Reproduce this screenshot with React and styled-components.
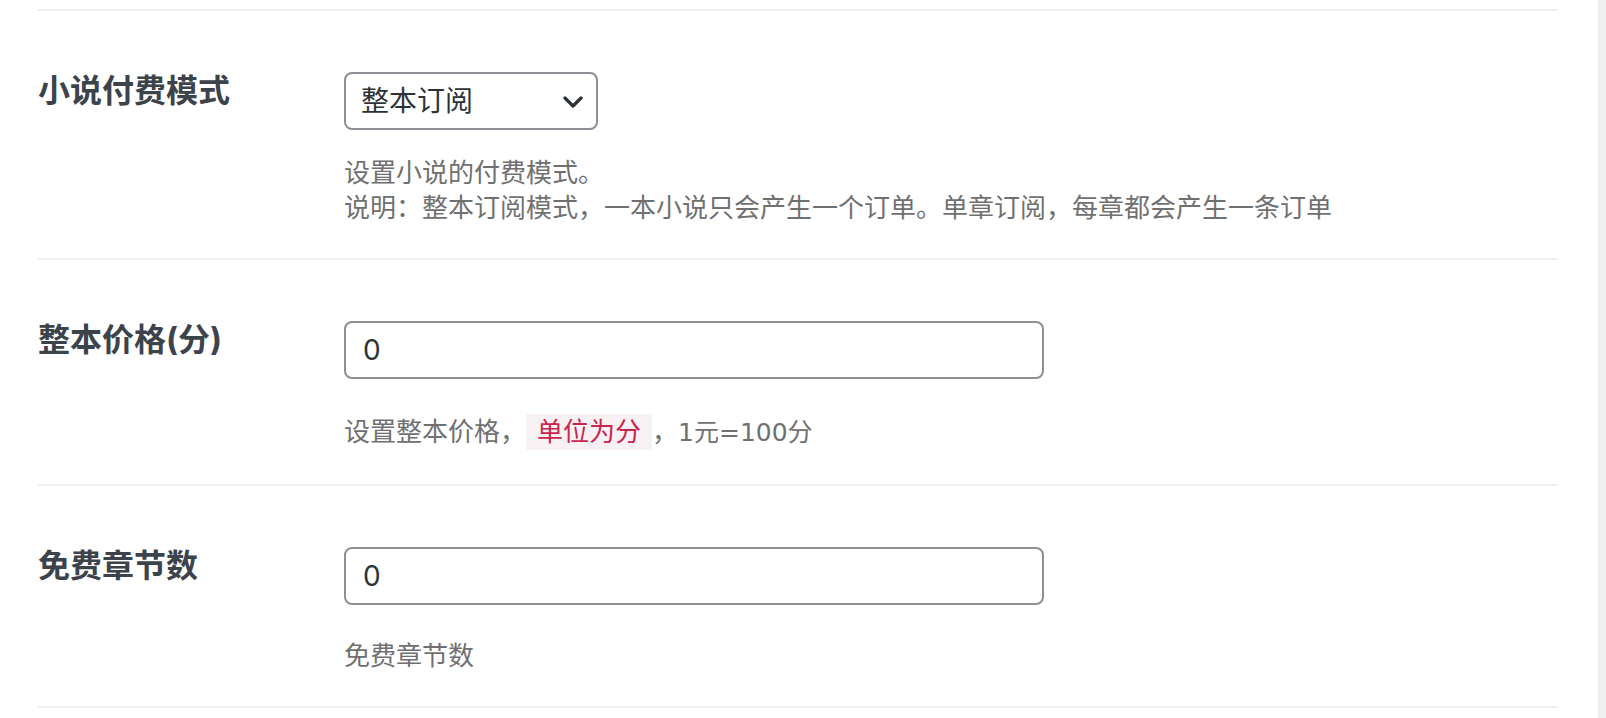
import React, {useState} from 'react';
import styled, {createGlobalStyle} from 'styled-components';

const GlobalStyle = createGlobalStyle`
  body {
    margin: 0;
    background: #fff;
    font-family: Inter, "Noto Sans CJK SC", sans-serif;
  }
`;

const ChevronDown = () => (
  <svg width="20" height="12" viewBox="0 0 20 12" fill="none">
    <polyline points="2,2 10,10 18,2" stroke="#2c3338" strokeWidth="3.2" strokeLinecap="round" strokeLinejoin="round" />
  </svg>
);

const App = () => {
  const [mode, setMode] = useState('whole');
  const [price, setPrice] = useState('0');
  const [free, setFree] = useState('0');

  return (
    <Page>
      <GlobalStyle />
      <Content>
        <FormTable>
          <Row>
            <Label>小说付费模式</Label>
            <Field>
              <SelectWrap>
                <Select value={mode} onChange={e => setMode(e.target.value)}>
                  <option value="whole">整本订阅</option>
                  <option value="chapter">单章订阅</option>
                </Select>
                <Chevron><ChevronDown /></Chevron>
              </SelectWrap>
              <Help $gap={25}>
                设置小说的付费模式。<br />
                说明：整本订阅模式，一本小说只会产生一个订单。单章订阅，每章都会产生一条订单
              </Help>
            </Field>
          </Row>
          <Row>
            <Label>整本价格(分)</Label>
            <Field>
              <TextInput type="text" value={price} onChange={e => setPrice(e.target.value)} />
              <Help $gap={35} $lh={36}>
                设置整本价格，<Code>单位为分</Code>，<Num>1元=100分</Num>
              </Help>
            </Field>
          </Row>
          <Row>
            <Label>免费章节数</Label>
            <Field>
              <TextInput type="text" value={free} onChange={e => setFree(e.target.value)} />
              <Help $gap={33}>免费章节数</Help>
            </Field>
          </Row>
        </FormTable>
      </Content>
      <Strip />
    </Page>
  );
};

const Page = styled.div`
  display: flex;
  min-height: 100vh;
`;
const Content = styled.div`
  flex: 1;
  padding: 9px 40px 0 38px;
`;
const Strip = styled.div`
  width: 8px;
  flex-shrink: 0;
  background: #efefef;
`;
const FormTable = styled.div`
  border-top: 2px solid #f0f0f1;
`;
const Row = styled.div`
  display: flex;
  padding: 61px 0 33px;
  border-bottom: 2px solid #f0f0f1;
`;
const Label = styled.div`
  width: 306px;
  flex-shrink: 0;
  font-size: 32px;
  font-weight: 700;
  line-height: 38px;
  color: #3c434a;
`;
const Field = styled.div`
  flex: 1;
`;
const SelectWrap = styled.div`
  position: relative;
  width: 254px;
`;
const Select = styled.select`
  display: block;
  width: 100%;
  height: 58px;
  box-sizing: border-box;
  appearance: none;
  border: 2px solid #8c8f94;
  border-radius: 8px;
  background: #fff;
  padding: 0 50px 0 15px;
  font-family: Inter, "Noto Sans CJK SC", sans-serif;
  font-size: 28px;
  color: #2c3338;
  outline: none;
`;
const Chevron = styled.span`
  position: absolute;
  right: 15px;
  top: 24px;
  display: flex;
  pointer-events: none;
`;
const TextInput = styled.input`
  display: block;
  width: 700px;
  height: 58px;
  box-sizing: border-box;
  border: 2px solid #8c8f94;
  border-radius: 8px;
  padding: 0 17px;
  font-family: Inter, "Noto Sans CJK SC", sans-serif;
  font-size: 28px;
  color: #2c3338;
  outline: none;
`;
const Help = styled.p`
  margin: ${p => p.$gap}px 0 0;
  font-size: 26px;
  line-height: ${p => p.$lh || 35}px;
  color: #707070;
`;
const Code = styled.code`
  display: inline-block;
  padding: 0 11px;
  line-height: 36px;
  vertical-align: top;
  background: #f7f1f3;
  color: #c9254f;
  font-family: Inter, "Noto Sans CJK SC", sans-serif;
`;
const Num = styled.span`
  font-family: "DejaVu Sans", "Noto Sans CJK SC", sans-serif;
  font-size: 25px;
`;

export default App;
